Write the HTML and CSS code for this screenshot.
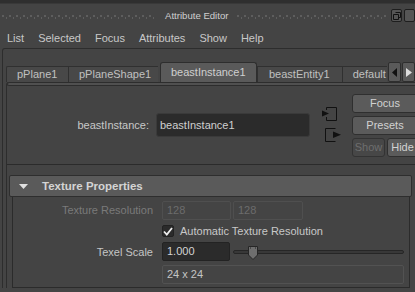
FILE: index.html
```html
<!DOCTYPE html>
<html>
<head>
<meta charset="utf-8">
<link rel="stylesheet" href="styles.css">
</head>
<body>
<div class="win">
  <div class="topstrip"></div>
  <div class="titlebar">
    <span class="grip grip-left"></span>
    <span class="title">Attribute Editor</span>
    <span class="grip grip-right"></span>
    <span class="tbtn">
      <svg width="8" height="8" viewBox="0 0 8 8"><path d="M2.5 0.5H7.5V5.5H5.5M0.5 2.5H5.5V7.5H0.5Z" fill="none" stroke="#111" stroke-width="1"/></svg>
    </span>
    <span class="tbtn tbtn-cut"></span>
  </div>
  <div class="menubar">
    <span>List</span><span>Selected</span><span>Focus</span><span>Attributes</span><span>Show</span><span>Help</span>
  </div>
  <div class="editor">
    <div class="tabrow">
      <div class="tab">pPlane1</div>
      <div class="tab">pPlaneShape1</div>
      <div class="tab active">beastInstance1</div>
      <div class="tab">beastEntity1</div>
      <div class="tab tab-cut">default</div>
      <div class="tabarrow"><svg width="6" height="9" viewBox="0 0 6 9"><path d="M5 0V9L0 4.5Z" fill="#111"/></svg></div>
      <div class="tabarrow"><svg width="6" height="9" viewBox="0 0 6 9"><path d="M0 0V9L6 4.5Z" fill="#ddd"/></svg></div>
    </div>
    <div class="pane">
      <div class="pane-top"></div>
      <div class="noderow">
        <label class="nodelabel">beastInstance:</label>
        <div class="nodefield">beastInstance1</div>
        <div class="nodeicons">
          <svg width="17" height="14" viewBox="0 0 17 14"><path d="M4.5 0.5H14.5V13.5H4.5V10" fill="none" stroke="#111"/><path d="M4.5 0.5V3" fill="none" stroke="#111"/><path d="M0 3.5V9.5L7 6.5Z" fill="#111"/></svg>
          <svg class="icon-low" width="17" height="14" viewBox="0 0 17 14"><path d="M10.5 0.5H0.5V13.5H10.5" fill="none" stroke="#111"/><path d="M8 3.5V10L16 6.75Z" fill="#111"/></svg>
        </div>
        <div class="nodebtns">
          <div class="btn">Focus</div>
          <div class="btn">Presets</div>
          <div class="btnpair">
            <div class="btn btn-off">Show</div>
            <div class="btn btn-hide">Hide</div>
          </div>
        </div>
      </div>
      <div class="scroll">
        <div class="frame">
          <div class="frame-head">
            <svg width="9" height="5" viewBox="0 0 9 5"><path d="M0 0H9L4.5 5Z" fill="#e0e0e0"/></svg>
            <span>Texture Properties</span>
          </div>
          <div class="frame-body">
            <div class="row r1">
              <span class="lbl dim">Texture Resolution</span>
              <div class="ctrls">
                <div class="fld fld-off w69">128</div>
                <div class="fld fld-off w70">128</div>
              </div>
            </div>
            <div class="row r2">
              <span class="lbl"></span>
              <div class="ctrls">
                <span class="chk"><svg width="10" height="9" viewBox="0 0 10 9"><path d="M1 4.5L3.8 7.5L9 1" fill="none" stroke="#eee" stroke-width="1.8"/></svg></span>
                <span class="chklbl">Automatic Texture Resolution</span>
              </div>
            </div>
            <div class="row r3">
              <span class="lbl">Texel Scale</span>
              <div class="ctrls">
                <div class="fld fld-dark w68">1.000</div>
                <div class="slider">
                  <div class="track"></div>
                  <svg class="handle" width="12" height="14" viewBox="0 0 12 14"><path d="M1.5 0.5H10.5V9L6 13.5L1.5 9Z" fill="#6e6e6e" stroke="#262626"/><path d="M3 2h1M8 2h1" stroke="#222"/></svg>
                </div>
              </div>
            </div>
            <div class="row r4">
              <span class="lbl"></span>
              <div class="ctrls">
                <div class="fld fld-ro">24 x 24</div>
              </div>
            </div>
          </div>
        </div>
      </div>
    </div>
  </div>
</div>
</body>
</html>
```

FILE: styles.css
```css
* { box-sizing: border-box; margin: 0; padding: 0; }
html, body { width: 415px; height: 292px; overflow: hidden; }
body {
  background: #444444;
  font-family: "Liberation Sans", Arial, sans-serif;
  font-size: 11px;
  color: #c6c6c6;
}
.win { width: 415px; height: 292px; overflow: hidden; }

.topstrip { height: 4px; background: #2f2f2f; border-bottom: 1px solid #393939; }

.titlebar {
  height: 23px;
  display: flex;
  align-items: center;
  padding-left: 2px;
}
.grip {
  height: 5px;
  background-image:
    linear-gradient(90deg, #5e5e5e 2px, transparent 2px),
    linear-gradient(90deg, transparent 1px, #5e5e5e 1px, #5e5e5e 2px, transparent 2px);
  background-size: 7px 2px, 7px 2px;
  background-position: 0 1px, 3px 3px;
  background-repeat: repeat-x;
  margin-top: 1px;
}
.grip-left { width: 155px; }
.grip-right { width: 153px; margin-left: 10px; }
.title {
  font-size: 9.6px;
  color: #cfcfcf;
  margin-left: 10px;
  width: 62px;
  white-space: nowrap;
}
.tbtn {
  width: 11px;
  height: 13px;
  margin-left: 3px;
  border: 1px solid #1e1e1e;
  border-radius: 2px;
  background: #555;
  display: flex;
  align-items: center;
  justify-content: center;
  flex-shrink: 0;
}
.tbtn-cut { margin-left: 2px; }

.menubar {
  height: 21px;
  display: flex;
  align-items: center;
  gap: 14px;
  padding-left: 7px;
  font-size: 11px;
  color: #c8c8c8;
}

.editor {
  margin-left: 2px;
  width: 430px;
  border: 1px solid #2d2d2d;
  border-bottom: none;
  border-radius: 3px 0 0 0;
  padding: 13px 0 0 3px;
}

.tabrow {
  display: flex;
  align-items: flex-end;
  height: 20px;
  width: 409px;
}
.tab {
  height: 16px;
  padding: 0 11px 0 10px;
  background: #484848;
  border: 1px solid #303030;
  border-bottom: none;
  border-right: none;
  line-height: 15px;
  white-space: nowrap;
  color: #c0c0c0;
}
.tab:first-child { border-radius: 2px 0 0 0; width: 62px; }
.tab:nth-child(2) { width: 90px; }
.tab.active {
  height: 20px;
  background: #5a5a5a;
  border: 1px solid #2e2e2e;
  border-bottom: none;
  border-radius: 3px 3px 0 0;
  margin-left: 2px;
  line-height: 18px;
  width: 97px;
  color: #cfcfcf;
}
.tab:nth-child(4) { width: 86px; padding-left: 11px; }
.tab.tab-cut { width: 46px; overflow: hidden; padding-left: 10px; padding-right: 0; }
.tabarrow {
  width: 13px;
  height: 20px;
  background: #5a5a5a;
  border: 1px solid #2e2e2e;
  border-radius: 2px;
  display: flex;
  align-items: center;
  justify-content: center;
  margin-left: 1px;
  flex-shrink: 0;
}

.pane {
  border-left: 1px solid #2d2d2d;
  border-radius: 3px 0 0 0;
}
.pane-top {
  height: 4px;
  background: #505050;
  border: 1px solid #2d2d2d;
  border-right: none;
  border-radius: 2px 0 0 2px;
}

.noderow {
  display: flex;
  align-items: center;
  height: 78px;
  padding: 0;
}
.nodelabel {
  width: 142px;
  text-align: right;
  color: #c8c8c8;
  flex-shrink: 0;
}
.nodefield {
  margin-left: 7px;
  width: 154px;
  height: 24px;
  background: #2b2b2b;
  border: 1px solid #3a3a3a;
  border-radius: 3px;
  padding-left: 3px;
  line-height: 22px;
  color: #d0d0d0;
  flex-shrink: 0;
}
.nodeicons {
  margin-left: 12px;
  width: 18px;
  display: flex;
  flex-direction: column;
  gap: 7px;
  padding-bottom: 2px;
  flex-shrink: 0;
}
.icon-low { margin-left: 3px; }
.nodebtns {
  margin-left: 12px;
  width: 66px;
  display: flex;
  flex-direction: column;
  gap: 3px;
  flex-shrink: 0;
}
.btn {
  height: 19px;
  background: #5b5b5b;
  border: 1px solid #2f2f2f;
  border-radius: 3px;
  text-align: center;
  line-height: 17px;
  color: #d2d2d2;
}
.btnpair { display: flex; gap: 2px; }
.btn-off {
  width: 33px;
  background: #474747;
  color: #6e6e6e;
  border-color: #333;
}
.btn-hide { width: 31px; }

.scroll {
  border-top: 1px solid #2b2b2b;
  margin-left: 0;
  padding: 10px 0 0 2px;
}
.frame {
  width: 403px;
}
.frame-head {
  height: 22px;
  background: #5a5a5a;
  border: 1px solid #2e2e2e;
  border-radius: 2px;
  display: flex;
  align-items: center;
  padding-left: 9px;
  gap: 14px;
  font-weight: bold;
  font-size: 11.5px;
  color: #d4d4d4;
}
.frame-body {
  margin: 0 2px 0 3px;
  border: 1px solid #2b2b2b;
  border-top: none;
  padding: 3px 0 3px 0;
}
.row {
  display: flex;
  align-items: center;
}
.r1 { height: 20px; }
.r2 { height: 20px; margin-top: 1px; }
.r3 { height: 19px; margin-top: 1px; }
.r4 { height: 19px; margin-top: 4px; }
.lbl {
  width: 140px;
  text-align: right;
  flex-shrink: 0;
  color: #c4c4c4;
}
.lbl.dim { color: #7a7a7a; }
.ctrls {
  margin-left: 9px;
  display: flex;
  align-items: center;
  gap: 2px;
  flex: 1;
  padding-right: 5px;
}
.fld {
  height: 19px;
  border-radius: 2px;
  padding-left: 4px;
  line-height: 17px;
  border: 1px solid #515151;
}
.fld-off { color: #6c6c6c; border-color: #4f4f4f; }
.w69 { width: 69px; }
.w70 { width: 70px; }
.w68 { width: 68px; }
.fld-dark { background: #2b2b2b; border-color: #232323; color: #d4d4d4; }
.fld-ro { flex: 1; color: #c4c4c4; border-color: #525252; }
.chk {
  width: 12px;
  height: 12px;
  background: #2b2b2b;
  border: 1px solid #222;
  border-radius: 2px;
  display: flex;
  align-items: center;
  justify-content: center;
  flex-shrink: 0;
}
.chklbl { margin-left: 4px; color: #c8c8c8; }
.slider {
  position: relative;
  flex: 1;
  height: 14px;
  margin-left: 1px;
  display: flex;
  align-items: center;
}
.track {
  width: 100%;
  height: 4px;
  background: #383838;
  border: 1px solid #262626;
  border-radius: 2px;
}
.handle {
  position: absolute;
  left: 14px;
  top: 1px;
}
```
